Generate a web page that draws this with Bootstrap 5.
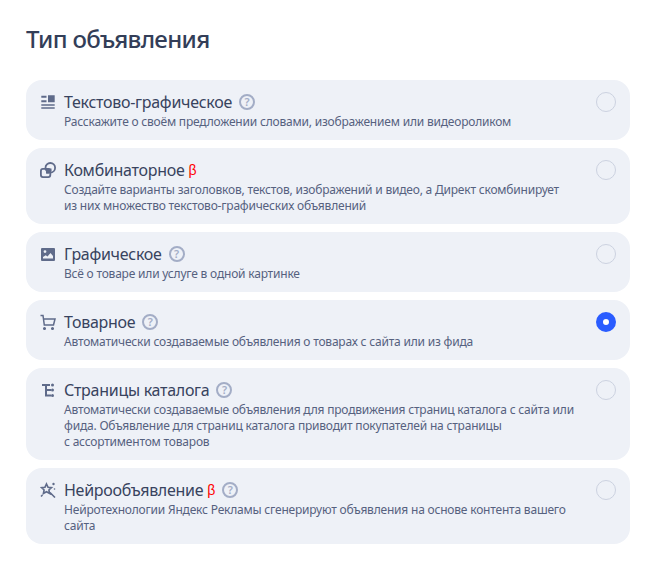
<!DOCTYPE html>
<html lang="ru">
<head>
  <meta charset="UTF-8" />
  <meta name="viewport" content="width=device-width, initial-scale=1.0"/>
  <title>Тип объявления</title>
  <link href="https://cdn.jsdelivr.net/npm/bootstrap@5.3.3/dist/css/bootstrap.min.css" rel="stylesheet">
  <style>
    body { font-family: "Noto Sans", "Liberation Sans", sans-serif; color: #2f3a52; background: #fff; }
    .page-wrap { padding: 23px 27px 26px 26px; }
    .page-title { font-size: 24px; line-height: 32px; font-weight: 500; letter-spacing: -0.65px; margin: 0 0 25px; color: #333e58; }
    .ad-type { background: #eef1f7; border-radius: 16px; padding: 10px 14px; cursor: pointer; }
    .ad-icon { width: 16px; height: 16px; margin: 4px 8px 0 0; flex: none; color: #5f6b8a; }
    .ad-name { font-size: 16px; line-height: 24px; letter-spacing: -0.28px; color: #38435e; }
    .ad-desc { font-size: 12px; line-height: 16px; letter-spacing: -0.2px; color: #56617f; max-width: 514px; }
    .beta { color: #f00; font-family: "Liberation Sans", sans-serif; font-size: 14px; letter-spacing: 0; }
    .hint { width: 16px; height: 16px; border: 2px solid #a3adc6; border-radius: 50%; color: #a3adc6; font-size: 11px; font-weight: 600; letter-spacing: 0; line-height: 12px; text-align: center; margin-left: 7px; flex: none; }
    .form-check-input.ad-radio { width: 20px; height: 20px; margin: 2px 0 0; flex: none; background-color: transparent; border: 1px solid #ccd2e0; }
    .form-check-input.ad-radio:checked { background-color: #fff; border: 7px solid #2a5cff; background-image: none; }
  </style>
</head>
<body>
  <div class="page-wrap">
    <h1 class="page-title">Тип объявления</h1>
    <div class="d-flex flex-column gap-2">

      <label class="ad-type d-flex">
        <svg class="ad-icon" viewBox="0 0 16 16" fill="currentColor"><path d="M1.300 1.700H6.500v2H1.300zM1.300 6.300H6.500v2H1.300zM1.300 10.300h13.400v1.500H1.300zM1.300 13.300h13.400v1.500H1.300zM8 1.200h6.700v7.100H8z"/></svg>
        <span class="flex-grow-1">
          <span class="d-flex align-items-center ad-name">Текстово-графическое <span class="hint">?</span></span>
          <span class="d-block ad-desc">Расскажите о своём предложении словами, изображением или видеороликом</span>
        </span>
        <input class="form-check-input ad-radio" type="radio" name="adType">
      </label>

      <label class="ad-type d-flex">
        <svg class="ad-icon" viewBox="0 0 16 16"><path fill="currentColor" d="M6 6.500h5.500v2a4 4 0 0 1-5.500 3z"/><g fill="none" stroke="currentColor" stroke-width="1.800"><rect x="0.900" y="6.900" width="9.400" height="8.200" rx="2"/><circle cx="10.300" cy="5.800" r="4.800"/></g></svg>
        <span class="flex-grow-1">
          <span class="d-flex align-items-center ad-name">Комбинаторное&nbsp;<span class="beta">β</span></span>
          <span class="d-block ad-desc">Создайте варианты заголовков, текстов, изображений и видео, а Директ скомбинирует<br>из них множество текстово-графических объявлений</span>
        </span>
        <input class="form-check-input ad-radio" type="radio" name="adType">
      </label>

      <label class="ad-type d-flex">
        <svg class="ad-icon" viewBox="0 0 16 16"><path fill="currentColor" fill-rule="evenodd" d="M2 2h12a1 1 0 0 1 1 1v11a1 1 0 0 1-1 1H2a1 1 0 0 1-1-1V3a1 1 0 0 1 1-1zM3 12.500h10v-2.500l-2.500-3-3 3.500-1.800-1.300L3 11zM5 4.200a1.400 1.400 0 1 0 0 2.800 1.400 1.400 0 0 0 0-2.800z"/></svg>
        <span class="flex-grow-1">
          <span class="d-flex align-items-center ad-name">Графическое <span class="hint">?</span></span>
          <span class="d-block ad-desc">Всё о товаре или услуге в одной картинке</span>
        </span>
        <input class="form-check-input ad-radio" type="radio" name="adType">
      </label>

      <label class="ad-type d-flex">
        <svg class="ad-icon" viewBox="0 0 16 16" fill="none" stroke="currentColor" stroke-width="1.500"><path d="M0.500 1.500H3L4.300 11h9.200L15 5H3.500"/><circle cx="4.500" cy="14.500" r="0.800" fill="currentColor"/><circle cx="12.500" cy="14.500" r="0.800" fill="currentColor"/></svg>
        <span class="flex-grow-1">
          <span class="d-flex align-items-center ad-name">Товарное <span class="hint">?</span></span>
          <span class="d-block ad-desc">Автоматически создаваемые объявления о товарах с сайта или из фида</span>
        </span>
        <input class="form-check-input ad-radio" type="radio" name="adType" checked>
      </label>

      <label class="ad-type d-flex">
        <svg class="ad-icon" viewBox="0 0 16 16" fill="none" stroke="currentColor" stroke-width="2"><path d="M2 3h8M6 3v10.500h5M6 8h5"/><circle cx="12.500" cy="3" r="1.500" fill="currentColor" stroke="none"/><circle cx="12.500" cy="8" r="1.500" fill="currentColor" stroke="none"/><circle cx="12.500" cy="13.500" r="1.500" fill="currentColor" stroke="none"/></svg>
        <span class="flex-grow-1">
          <span class="d-flex align-items-center ad-name">Страницы каталога <span class="hint">?</span></span>
          <span class="d-block ad-desc">Автоматически создаваемые объявления для продвижения страниц каталога с сайта или фида. Объявление для страниц каталога приводит покупателей на страницы<br>с ассортиментом товаров</span>
        </span>
        <input class="form-check-input ad-radio" type="radio" name="adType">
      </label>

      <label class="ad-type d-flex">
        <svg class="ad-icon" viewBox="0 0 16 16" fill="none" stroke="currentColor" stroke-width="1.600"><path d="M6.500 2l1.500 3.200 3.500.4-2.600 2.400.7 3.500-3.100-1.800-3.100 1.800.7-3.500L1.500 5.600 5 5.200zM10 10.500l5 5"/><path d="M2.500 13l-1.500 1.500"/><circle cx="13.500" cy="2" r="1.200" fill="currentColor" stroke="none"/><circle cx="14.500" cy="7" r="0.800" fill="currentColor" stroke="none"/></svg>
        <span class="flex-grow-1">
          <span class="d-flex align-items-center ad-name">Нейрообъявление&nbsp;<span class="beta">β</span> <span class="hint">?</span></span>
          <span class="d-block ad-desc">Нейротехнологии Яндекс Рекламы сгенерируют объявления на основе контента вашего сайта</span>
        </span>
        <input class="form-check-input ad-radio" type="radio" name="adType">
      </label>

    </div>
  </div>
  <script src="https://cdn.jsdelivr.net/npm/bootstrap@5.3.3/dist/js/bootstrap.bundle.min.js"></script>
</body>
</html>
